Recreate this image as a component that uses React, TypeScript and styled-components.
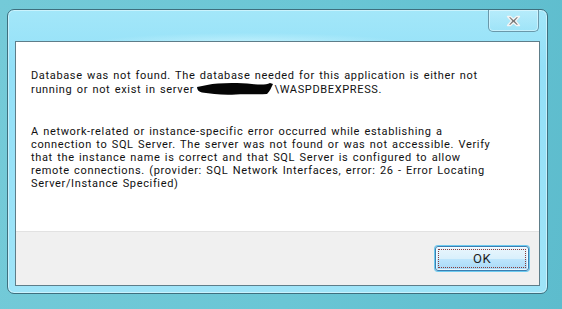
import React from "react";
import styled, { createGlobalStyle } from "styled-components";

const GlobalStyle = createGlobalStyle`
  html, body {
    margin: 0;
    padding: 0;
  }
  body {
    width: 562px;
    height: 309px;
    overflow: hidden;
    background: linear-gradient(100deg, #74cad8 0%, #6ac6d5 55%, #5dbccd 100%);
    font-family: Roboto, "Liberation Sans", sans-serif;
  }
`;

const Page = styled.div`
  padding: 9px 0 0 7px;
`;

const Window = styled.div`
  box-sizing: border-box;
  width: 541px;
  height: 285px;
  border: 1px solid #3f6f7e;
  border-radius: 7px;
  padding: 0 7px 7px;
  display: flex;
  flex-direction: column;
  background:
    radial-gradient(ellipse 200px 14px at 240px 34px, rgba(215, 248, 255, 0.7), rgba(215, 248, 255, 0) 80%),
    linear-gradient(180deg, #a3e7f9 0%, #93e0f8 20%, #9fe4f8 100%);
  box-shadow: inset 0 0 0 1px rgba(220, 248, 255, 0.7);
`;

const TitleBar = styled.div`
  height: 31px;
  display: flex;
  justify-content: flex-end;
  padding-right: 1px;
  flex-shrink: 0;
`;

const CloseButton = styled.div`
  width: 51px;
  height: 22px;
  box-sizing: border-box;
  border: 1px solid #6a98aa;
  border-top: none;
  border-radius: 0 0 5px 5px;
  background: linear-gradient(180deg, rgba(190, 238, 252, 0.7), rgba(160, 226, 246, 0.4));
  box-shadow: inset 0 0 0 1px rgba(225, 248, 255, 0.6);
  display: flex;
  align-items: center;
  justify-content: center;
  padding-top: 1px;
`;

const Panel = styled.div`
  flex: 1;
  border: 1px solid #5e7d89;
  display: flex;
  flex-direction: column;
  background: #ffffff;
`;

const Body = styled.div`
  height: 189px;
  box-sizing: border-box;
  padding: 27px 0 0 15px;
  background: #ffffff;
  color: #111111;
  font-size: 11px;
  line-height: 13px;
  letter-spacing: 0.65px;
  word-spacing: 1px;
`;

const Para = styled.p<{ $gap?: number }>`
  margin: ${(p) => p.$gap ?? 0}px 0 0;
  white-space: nowrap;
`;

const Blob = styled.svg`
  display: inline-block;
  vertical-align: -3px;
  margin-left: -2px;
`;

const Footer = styled.div`
  flex: 1;
  background: #f0f0f0;
  border-top: 1px solid #e2e2e2;
  display: flex;
  justify-content: flex-end;
  align-items: flex-start;
  padding: 14px 10px 0 0;
`;

const OkButton = styled.button`
  width: 94px;
  height: 25px;
  box-sizing: border-box;
  border: 1px solid #3c7fb1;
  border-radius: 3px;
  background: linear-gradient(180deg, #eaf6fd 0%, #d9f0fc 50%, #bee6fd 51%, #a7d9f5 100%);
  box-shadow: 0 0 0 1px #6ecbf0, inset 0 0 0 1px rgba(255, 255, 255, 0.7);
  padding: 2px;
  font-family: Roboto, "Liberation Sans", sans-serif;
  font-size: 13px;
  letter-spacing: 0.5px;
  color: #1e1e1e;
  cursor: default;
`;

const FocusRect = styled.span`
  display: flex;
  align-items: center;
  justify-content: center;
  height: 100%;
  box-sizing: border-box;
  border: 1px dotted #8a3a3a;
`;

const CloseGlyph = () => (
  <svg width="15" height="12" viewBox="0 0 15 12">
    <path
      d="M1.5 1.5 L4.5 1.5 L7.5 4.3 L10.5 1.5 L13.5 1.5 L9.6 6 L13.5 10.5 L10.5 10.5 L7.5 7.7 L4.5 10.5 L1.5 10.5 L5.4 6 Z"
      fill="#7a7a7a"
      stroke="#f4f4f4"
      strokeWidth="1.3"
      strokeLinejoin="round"
    />
  </svg>
);

const Redaction = () => (
  <Blob width="78" height="14" viewBox="0 0 78 14">
    <path
      d="M1 5 C8 4 14 2 22 1.5 C34 0.5 46 1 56 2 C64 2.8 70 3 74 1 L77 2 C75 6 74 9 71 12 C60 13 50 11.5 40 12.5 C28 13.5 16 12 6 10.5 C3 10 1 8 1 5 Z"
      fill="#050505"
    />
  </Blob>
);

export default function App() {
  return (
    <>
      <GlobalStyle />
      <Page>
        <Window>
          <TitleBar>
            <CloseButton>
              <CloseGlyph />
            </CloseButton>
          </TitleBar>
          <Panel>
            <Body>
              <Para>
                Database was not found. The database needed for this application is either not
                <br />
                running or not exist in server <Redaction />\WASPDBEXPRESS.
              </Para>
              <Para $gap={29}>
                A network-related or instance-specific error occurred while establishing a
                <br />
                connection to SQL Server. The server was not found or was not accessible. Verify
                <br />
                that the instance name is correct and that SQL Server is configured to allow
                <br />
                remote connections. (provider: SQL Network Interfaces, error: 26 - Error Locating
                <br />
                Server/Instance Specified)
              </Para>
            </Body>
            <Footer>
              <OkButton>
                <FocusRect>OK</FocusRect>
              </OkButton>
            </Footer>
          </Panel>
        </Window>
      </Page>
    </>
  );
}
